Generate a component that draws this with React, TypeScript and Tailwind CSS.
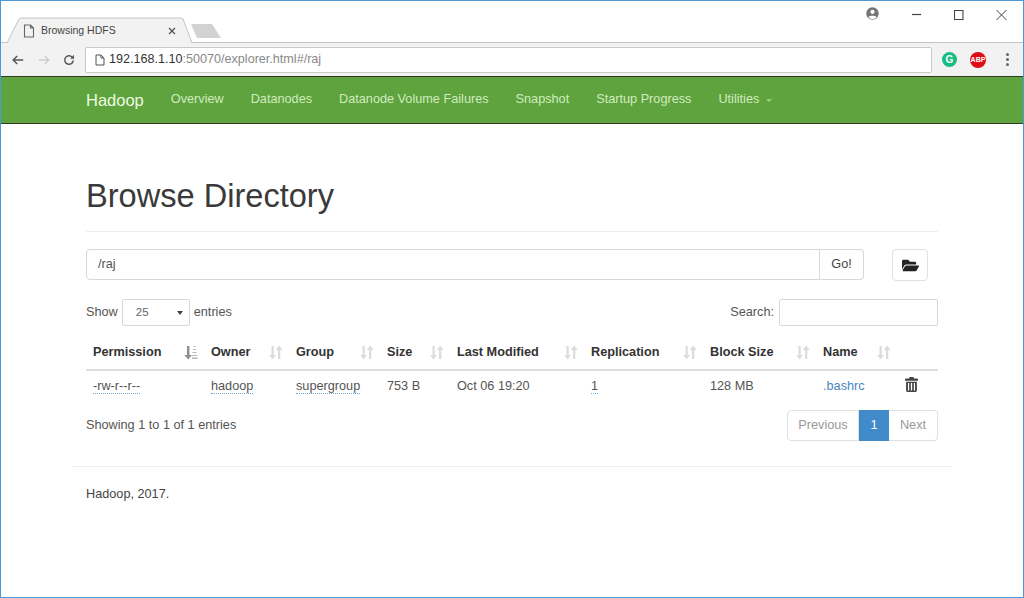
import { FaFolderOpen } from "react-icons/fa";

const navItems = ["Overview", "Datanodes", "Datanode Volume Failures", "Snapshot", "Startup Progress"];

const columns = [
  { label: "Permission", width: "w-[118px]", active: true },
  { label: "Owner", width: "w-[85px]" },
  { label: "Group", width: "w-[91px]" },
  { label: "Size", width: "w-[70px]" },
  { label: "Last Modified", width: "w-[134px]" },
  { label: "Replication", width: "w-[119px]" },
  { label: "Block Size", width: "w-[113px]" },
  { label: "Name", width: "w-[81px]" },
];

function SortIcon({ active }: { active?: boolean }) {
  if (active) {
    return (
      <svg width="14" height="15" viewBox="0 0 14 15" className="text-[#8f8f8f]">
        <path d="M3 1h2.400v9H8l-3.800 4.500L.4 10H3z" fill="currentColor" />
        <path d="M9.500 1h2v1h-2zM9 4h3v1H9zM8.500 7h4v1h-4zM8 10h5v1H8zM8 12.500h5.500v1.500H8z" fill="#b5b5b5" />
      </svg>
    );
  }
  return (
    <svg width="14" height="15" viewBox="0 0 14 15" className="text-[#dcdcdc]">
      <path d="M2.500 1h2.200v9H7l-3.400 4.500L.2 10h2.300z" fill="currentColor" />
      <path d="M9 14V5H6.800l3.400-4.500L13.600 5h-2.300v9z" fill="currentColor" />
    </svg>
  );
}

function TrashIcon() {
  return (
    <svg width="13" height="15" viewBox="0 0 14 16" fill="#444" className="-mt-[5px] ml-[1px]">
      <path d="M5 0h4l.6 1.500H13c.6 0 1 .4 1 1V4H0V2.500c0-.6.4-1 1-1h3.400z" />
      <path d="M1.200 5h11.600v9.500c0 .9-.6 1.500-1.500 1.500H2.700c-.9 0-1.500-.6-1.500-1.500zM3.200 6.500v8h1.300v-8zM6.300 6.500v8h1.400v-8zM9.500 6.500v8h1.300v-8z" fillRule="evenodd" />
    </svg>
  );
}

function BrowserChrome() {
  return (
    <div className="border-b border-[#2d3b26] bg-white">
      <div className="flex h-[42px] items-end justify-between border-b border-[#c4c4c4]">
        <div className="-mb-px flex items-end pl-[6px]">
          <div className="relative h-[26px] w-[186px]">
            <svg width="186" height="26" viewBox="0 0 186 26" className="absolute inset-0">
              <path d="M0 26 L12 2 Q13 1 15 1 H173 Q175 1 176 2 L185 26" fill="#f2f2f2" stroke="#c4c4c4" />
            </svg>
            <div className="relative flex h-full items-center pl-[16px] pr-[17px] pt-[1px] text-[10.500px] text-[#444]">
              <svg width="12" height="14" viewBox="0 0 12 14" fill="none" stroke="#666" strokeWidth="1.100">
                <path d="M1.500 1h6l3 3v9h-9zM7.500 1v3h3" />
              </svg>
              <span className="ml-[6px] flex-1">Browsing HDFS</span>
              <svg width="8" height="8" viewBox="0 0 8 8" stroke="#555" strokeWidth="1.300">
                <path d="M1 1l6 6M7 1L1 7" />
              </svg>
            </div>
          </div>
          <svg width="32" height="16" viewBox="0 0 32 16" className="mb-[4px] ml-[-3px]">
            <path d="M1 1H22L31 15H7z" fill="#d2d2d2" />
          </svg>
        </div>
        <div className="flex h-full items-start pr-[16px] pt-[7px] text-[#555]">
          <svg width="13" height="13" viewBox="0 0 13 13" className="mr-[33px] -mt-[1px]">
            <circle cx="6.500" cy="6.500" r="6.200" fill="#757575" />
            <circle cx="6.500" cy="4.800" r="2.100" fill="#fff" />
            <path d="M2.500 10c.8-1.700 7.200-1.700 8 0-1 1.400-2.500 2-4 2s-3-.6-4-2z" fill="#fff" />
          </svg>
          <svg width="10" height="13" viewBox="0 0 10 13" stroke="#444" className="mr-[32px]">
            <path d="M0 6.500h9" strokeWidth="1.200" />
          </svg>
          <svg width="10" height="13" viewBox="0 0 10 13" fill="none" stroke="#444" className="mr-[32px]">
            <path d="M.5 2.500h8.500v9H.5z" strokeWidth="1.100" />
          </svg>
          <svg width="11" height="13" viewBox="0 0 11 13" stroke="#444">
            <path d="M.5 2l10 10M10.500 2l-10 10" strokeWidth="1" />
          </svg>
        </div>
      </div>
      <div className="flex h-[33px] items-center bg-[#f2f2f2] pl-[11px]">
        <svg width="12" height="12" viewBox="0 0 15 13" fill="none" stroke="#555" strokeWidth="1.800">
          <path d="M14 6.500H2M6.500 1.500l-5 5 5 5" />
        </svg>
        <svg width="12" height="12" viewBox="0 0 15 13" fill="none" stroke="#cfcfcf" strokeWidth="1.800" className="ml-[14px]">
          <path d="M1 6.500h12M8.500 1.500l5 5-5 5" />
        </svg>
        <svg width="12" height="12" viewBox="0 0 14 14" fill="none" stroke="#555" strokeWidth="1.700" className="ml-[13px]">
          <path d="M12 7.500a5 5 0 1 1-1.400-4L12.500 5" />
          <path d="M12.800 1v4.400H8.400" fill="#555" stroke="none" />
        </svg>
        <div className="ml-[10px] flex h-[26px] w-[847px] items-center rounded-[2px] border border-[#c9c9c9] bg-white pl-[9px] text-[12.600px] text-[#888]">
          <svg width="10" height="12" viewBox="0 0 10 12" fill="none" stroke="#555" className="mr-[4px]">
            <path d="M1 1h5l3 3v7H1zM6 1v3h3" />
          </svg>
          <span className="text-[#333]">192.168.1.10</span>
          <span>:50070/explorer.html#/raj</span>
        </div>
        <div className="ml-[10px] flex h-[15px] w-[15px] items-center justify-center rounded-full bg-[#15bd7e] text-[10px] font-bold leading-none text-white">
          G
        </div>
        <div className="ml-[13px] flex h-[16px] w-[16px] items-center justify-center rounded-full bg-[#e00c16] text-[7px] font-bold leading-none text-white">
          ABP
        </div>
        <div className="ml-[20px] flex flex-col gap-[2.500px]">
          <span className="h-[2.500px] w-[2.500px] rounded-full bg-[#666]" />
          <span className="h-[2.500px] w-[2.500px] rounded-full bg-[#666]" />
          <span className="h-[2.500px] w-[2.500px] rounded-full bg-[#666]" />
        </div>
      </div>
    </div>
  );
}

function Navbar() {
  return (
    <nav className="flex h-[47px] items-center border-b border-[#2d3b26] bg-[#5fa33e] pl-[85px] text-[12.700px] text-[#d0ecbe]">
      <span className="mr-[27px] text-[16.500px] text-[#ecfbe0]">Hadoop</span>
      <div className="flex gap-[27px]">
        {navItems.map((item) => (
          <span key={item}>{item}</span>
        ))}
        <span className="flex items-center gap-[7px]">
          Utilities
          <span className="mt-[2px] h-0 w-0 border-x-[3px] border-t-[3px] border-x-transparent border-t-[#9ccc82]" />
        </span>
      </div>
    </nav>
  );
}

function FileTable() {
  const abbr = "border-b border-dotted border-[#6aa9d8]";
  return (
    <table className="w-[852px] table-fixed border-collapse">
      <thead>
        <tr className="border-b-2 border-[#dedede]">
          {columns.map((col) => (
            <th key={col.label} className={`${col.width} h-[36px] pl-[7px] pr-[6px] text-left font-bold text-[#333]`}>
              <div className="flex items-center justify-between pt-[2px]">
                {col.label}
                <SortIcon active={col.active} />
              </div>
            </th>
          ))}
          <th className="w-[41px]" />
        </tr>
      </thead>
      <tbody>
        <tr className="h-[32px] text-[#555]">
          <td className="pl-[7px]">
            <span className={abbr}>-rw-r--r--</span>
          </td>
          <td className="pl-[7px]">
            <span className={abbr}>hadoop</span>
          </td>
          <td className="pl-[7px]">
            <span className={abbr}>supergroup</span>
          </td>
          <td className="pl-[7px]">753 B</td>
          <td className="pl-[7px]">Oct 06 19:20</td>
          <td className="pl-[7px]">
            <span className={abbr}>1</span>
          </td>
          <td className="pl-[7px]">128 MB</td>
          <td className="pl-[7px] text-[#4a86c0]">.bashrc</td>
          <td className="pl-[7px]">
            <TrashIcon />
          </td>
        </tr>
      </tbody>
    </table>
  );
}

export default function App() {
  return (
    <div className="h-[598px] w-[1024px] overflow-hidden border border-[#4a9bd4] bg-white font-['Liberation_Sans',Arial,sans-serif] text-[12.700px] text-[#555]">
      <BrowserChrome />
      <Navbar />
      <main className="ml-[71px] w-[880px] px-[14px]">
        <h1 className="mt-[53px] h-[55px] border-b border-[#eeeeee] text-[32.600px] leading-[38px] text-[#3a3a3a]">
          Browse Directory
        </h1>
        <div className="mt-[17px] flex">
          <div className="flex h-[31px] w-[778px]">
            <div className="flex flex-1 items-center rounded-l-[4px] border border-[#d8d8d8] pl-[11px] pt-[1px] text-[#555]">/raj</div>
            <div className="flex w-[44px] items-center justify-center rounded-r-[4px] border border-l-0 border-[#d8d8d8] pt-[1px] text-[#444]">Go!</div>
          </div>
          <div className="ml-[28px] flex h-[32px] w-[36px] items-center justify-center rounded-[4px] border border-[#e0e0e0] text-[#222]">
            <FaFolderOpen size={17} />
          </div>
        </div>
        <div className="mt-[18px] flex items-center justify-between">
          <div className="flex items-center">
            Show
            <div className="mx-[4px] flex h-[27px] w-[68px] items-center justify-between rounded-[2px] border border-[#d8d8d8] pl-[13px] pr-[6px] text-[11.500px] text-[#666]">
              25
              <span className="h-0 w-0 border-x-[3px] border-t-[4px] border-x-transparent border-t-[#444]" />
            </div>
            entries
          </div>
          <div className="flex items-center gap-[5px]">
            Search:
            <div className="h-[27px] w-[159px] rounded-[2px] border border-[#d8d8d8]" />
          </div>
        </div>
        <div className="mt-[8px]">
          <FileTable />
        </div>
        <div className="mt-[8px] flex items-start justify-between">
          <span className="mt-[6px]">Showing 1 to 1 of 1 entries</span>
          <div className="flex h-[31px] text-[#999]">
            <span className="flex w-[72px] items-center justify-center rounded-l-[4px] border border-[#e0e0e0]">Previous</span>
            <span className="flex w-[30px] items-center justify-center bg-[#428bca] text-white">1</span>
            <span className="flex w-[49px] items-center justify-center rounded-r-[4px] border border-l-0 border-[#e0e0e0]">Next</span>
          </div>
        </div>
      </main>
      <footer className="ml-[71px] mt-[25px] w-[880px] border-t border-[#eeeeee] px-[14px] pt-[18px] text-[#444]">
        Hadoop, 2017.
      </footer>
    </div>
  );
}
